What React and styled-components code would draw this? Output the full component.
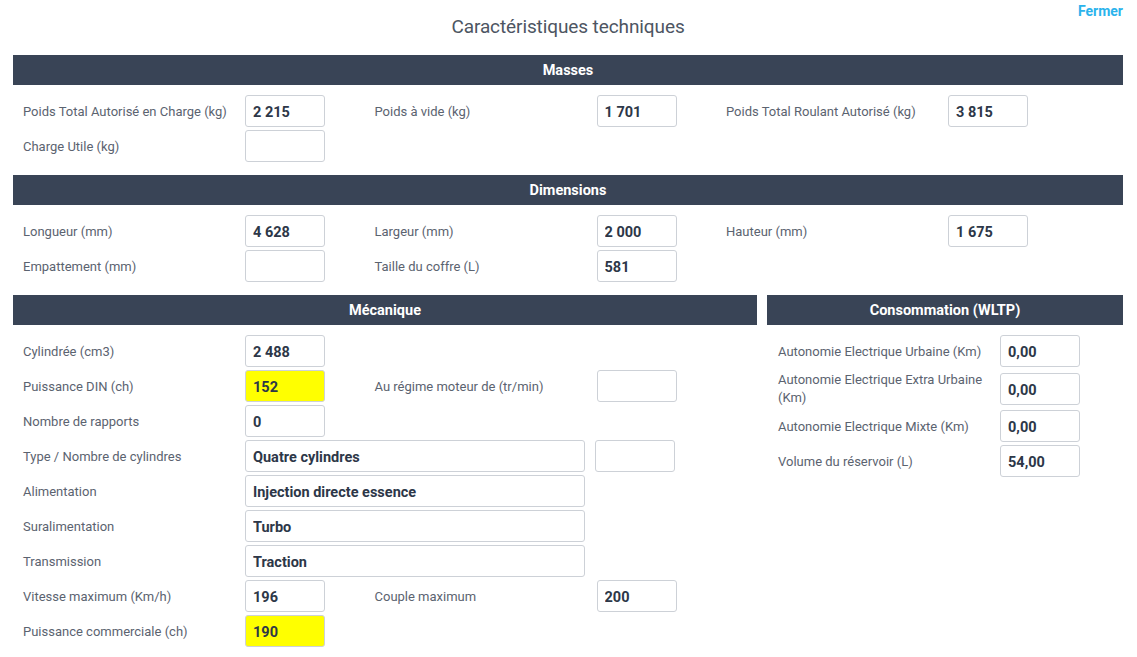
import styled, { createGlobalStyle } from "styled-components";

const GlobalStyle = createGlobalStyle`
    body {
        margin: 0;
        background: #ffffff;
        font-family: Roboto, "Liberation Sans", sans-serif;
    }
`;

const masses = [
    { label: "Poids Total Autorisé en Charge (kg)", value: "2 215" },
    { label: "Poids à vide (kg)", value: "1 701" },
    { label: "Poids Total Roulant Autorisé (kg)", value: "3 815" },
    { label: "Charge Utile (kg)", value: "" },
];

const dimensions = [
    { label: "Longueur (mm)", value: "4 628" },
    { label: "Largeur (mm)", value: "2 000" },
    { label: "Hauteur (mm)", value: "1 675" },
    { label: "Empattement (mm)", value: "" },
    { label: "Taille du coffre (L)", value: "581" },
];

const consommation = [
    { label: "Autonomie Electrique Urbaine (Km)", value: "0,00" },
    { label: "Autonomie Electrique Extra Urbaine (Km)", value: "0,00" },
    { label: "Autonomie Electrique Mixte (Km)", value: "0,00" },
    { label: "Volume du réservoir (L)", value: "54,00" },
];

function Field({ label, value, wide, highlight }) {
    return (
        <FieldBox $wide={wide}>
            <Label>{label}</Label>
            <Input readOnly value={value} $wide={wide} $highlight={highlight} />
        </FieldBox>
    );
}

function App() {
    return (
        <Page>
            <GlobalStyle />
            <TopBar>
                <span />
                <Title>Caractéristiques techniques</Title>
                <CloseLink href="#">Fermer</CloseLink>
            </TopBar>

            <Section>
                <SectionHeader>Masses</SectionHeader>
                <GridBody>
                    {masses.map((f) => (
                        <Field key={f.label} {...f} />
                    ))}
                </GridBody>
            </Section>

            <Section>
                <SectionHeader>Dimensions</SectionHeader>
                <GridBody>
                    {dimensions.map((f) => (
                        <Field key={f.label} {...f} />
                    ))}
                </GridBody>
            </Section>

            <SplitRow>
                <Section $width="744px">
                    <SectionHeader>Mécanique</SectionHeader>
                    <ListBody>
                        <Row>
                            <Field label="Cylindrée (cm3)" value="2 488" />
                        </Row>
                        <Row>
                            <Field label="Puissance DIN (ch)" value="152" highlight />
                            <Field label="Au régime moteur de (tr/min)" value="" />
                        </Row>
                        <Row>
                            <Field label="Nombre de rapports" value="0" />
                        </Row>
                        <Row>
                            <Field label="Type / Nombre de cylindres" value="Quatre cylindres" wide />
                            <SideInput readOnly value="" />
                        </Row>
                        <Row>
                            <Field label="Alimentation" value="Injection directe essence" wide />
                        </Row>
                        <Row>
                            <Field label="Suralimentation" value="Turbo" wide />
                        </Row>
                        <Row>
                            <Field label="Transmission" value="Traction" wide />
                        </Row>
                        <Row>
                            <Field label="Vitesse maximum (Km/h)" value="196" />
                            <Field label="Couple maximum" value="200" />
                        </Row>
                        <Row>
                            <Field label="Puissance commerciale (ch)" value="190" highlight />
                        </Row>
                    </ListBody>
                </Section>

                <Section $width="356px">
                    <SectionHeader>Consommation (WLTP)</SectionHeader>
                    <ListBody $inset>
                        {consommation.map((f) => (
                            <Row key={f.label}>
                                <Field {...f} />
                            </Row>
                        ))}
                    </ListBody>
                </Section>
            </SplitRow>
        </Page>
    );
}

const Page = styled.div`
    width: 1110px;
    padding: 0 14px 0 13px;
`;

const TopBar = styled.div`
    display: grid;
    grid-template-columns: 1fr auto 1fr;
    height: 55px;
`;

const Title = styled.h1`
    margin: 0;
    padding-top: 15px;
    font-size: 19px;
    font-weight: 400;
    color: #4d5562;
    letter-spacing: -0.1px;
`;

const CloseLink = styled.a`
    justify-self: end;
    padding-top: 3px;
    font-size: 14px;
    font-weight: 700;
    color: #2bb3ec;
    text-decoration: none;
`;

const Section = styled.section`
    width: ${(p) => p.$width || "100%"};
    margin-bottom: 13px;
`;

const SectionHeader = styled.div`
    height: 30px;
    padding-top: 1px;
    box-sizing: border-box;
    background-color: #394456;
    color: #ffffff;
    font-size: 14.5px;
    font-weight: 700;
    display: flex;
    align-items: center;
    justify-content: center;
`;

const GridBody = styled.div`
    display: grid;
    grid-template-columns: repeat(3, 351.5px);
    row-gap: 3px;
    padding-top: 10px;
`;

const SplitRow = styled.div`
    display: flex;
    gap: 10px;
`;

const ListBody = styled.div`
    display: flex;
    flex-direction: column;
    gap: 3px;
    padding-top: 10px;
    padding-left: ${(p) => (p.$inset ? "1px" : "0")};
`;

const Row = styled.div`
    display: flex;
    align-items: center;
`;

const FieldBox = styled.div`
    display: flex;
    align-items: center;
    width: ${(p) => (p.$wide ? "auto" : "351.5px")};
`;

const Label = styled.label`
    width: 232px;
    flex-shrink: 0;
    box-sizing: border-box;
    padding: 1px 12px 0 10px;
    font-size: 13px;
    line-height: 18px;
    color: #5b6370;
`;

const Input = styled.input`
    width: ${(p) => (p.$wide ? "340px" : "80px")};
    height: 32px;
    box-sizing: border-box;
    padding: 3px 7px 0;
    border: 1px solid #cdd1d7;
    border-radius: 3px;
    background-color: ${(p) => (p.$highlight ? "#ffff00" : "#ffffff")};
    font-family: Roboto, "Liberation Sans", sans-serif;
    font-size: 14.5px;
    font-weight: 700;
    color: #2d3748;
    outline: none;
`;

const SideInput = styled(Input)`
    margin-left: 10px;
`;

export default App;
